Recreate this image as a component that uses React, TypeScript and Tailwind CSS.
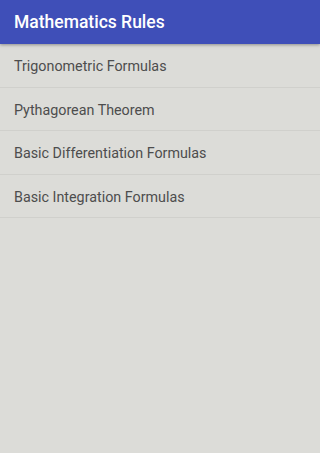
import React from 'react';

const rules = [
  'Trigonometric Formulas',
  'Pythagorean Theorem',
  'Basic Differentiation Formulas',
  'Basic Integration Formulas',
];

export default function App() {
  return (
    <div className="h-[453px] w-[320px] overflow-hidden bg-[#dcdcd8]" style={{ fontFamily: 'Roboto, "Noto Sans", sans-serif' }}>
      <div className="relative z-10 flex h-[44px] items-center bg-[#3f4fb8] px-[14px] shadow-[0_1px_3px_rgba(0,0,0,0.35)]">
        <h1 className="text-[17.5px] font-medium text-white">Mathematics Rules</h1>
      </div>
      <ul>
        {rules.map((rule) => (
          <li key={rule} className="flex h-[43.6px] items-center border-b border-[#d0d0cc] px-[14px] pt-[3px] text-[14.3px] text-[#4d4d4d]">
            {rule}
          </li>
        ))}
      </ul>
    </div>
  );
}
